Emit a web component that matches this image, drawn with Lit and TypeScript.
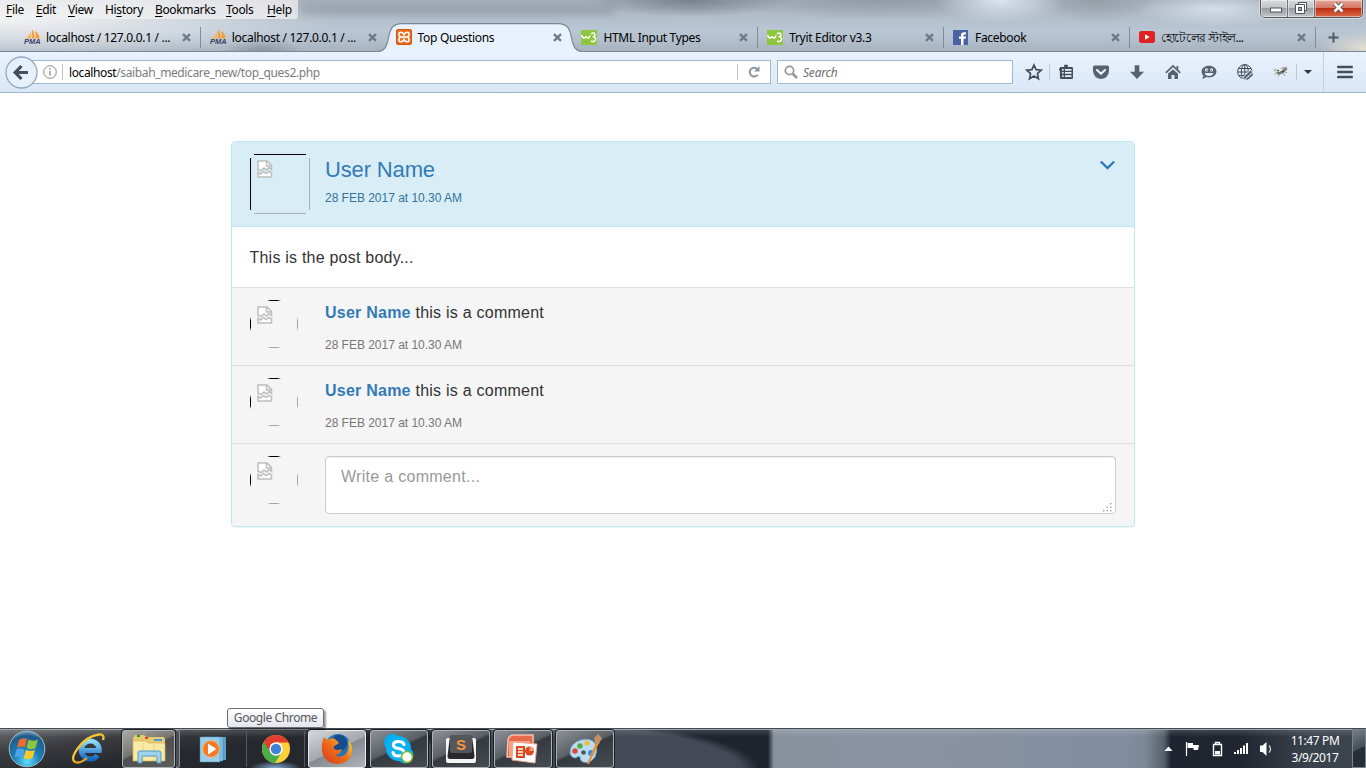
import { LitElement, html, css, svg, nothing } from "lit";
import { customElement } from "lit/decorators.js";
import { classMap } from "lit/directives/class-map.js";

const closeX = html`<svg class="x" width="9" height="9" viewBox="0 0 9 9"><path d="M1 1.2 L8 7.8 M8 1.2 L1 7.8" stroke="#6b7a8a" stroke-width="2.3" fill="none"/></svg>`;

const pma = html`<svg width="17" height="16" viewBox="0 0 17 16">
  <path d="M7 1 C6.5 5 4 8 1.5 9.5 L7.5 9.5 Z" fill="#f9b45c"/><path d="M8.3 0 V9.5 H10.2 C10.5 6 10 3 8.3 0Z" fill="#f79320"/>
  <path d="M11 2 C14 4 15.5 6.5 15.5 9.5 H11.2 C12 7 11.8 4 11 2Z" fill="#f89c2e"/>
  <text x="0" y="15.3" font-family="Liberation Sans, sans-serif" font-size="6.6" font-weight="bold" font-style="italic" fill="#3d3c68" textLength="16.5" lengthAdjust="spacingAndGlyphs">PMA</text></svg>`;
const xampp = html`<svg width="16" height="16" viewBox="0 0 16 16"><rect x=".5" y=".5" width="15" height="15" rx="1.5" fill="#ec6b1e" stroke="#c8560f"/>
  <path d="M8 5.600Q7 3.200 4.800 3.200Q2.900 3.200 2.900 5.200Q2.900 7.400 4.800 8Q2.900 8.600 2.900 10.800Q2.900 12.800 4.800 12.800Q7 12.800 8 10.400Q9 12.800 11.200 12.800Q13.100 12.800 13.100 10.800Q13.100 8.600 11.200 8Q13.100 7.400 13.100 5.200Q13.100 3.200 11.200 3.200Q9 3.200 8 5.600ZM5.500 8H10.500" fill="none" stroke="#fff" stroke-width="1.600"/></svg>`;
const w3 = html`<svg width="16" height="15" viewBox="0 0 16 15"><rect width="16" height="15" rx=".5" fill="#8dc63f"/>
  <path d="M.8 5.200Q1.200 8 3 8Q4.700 8 4.900 6Q5.200 8 6.800 8Q8.400 8 9 5.500" fill="none" stroke="#fff" stroke-width="1.500"/>
  <path d="M10 4Q12 2.300 13.600 3.600Q14.800 6.200 11.800 6.800Q15.200 7 14.500 9.800Q13.200 12.600 10 11" fill="none" stroke="#fff" stroke-width="1.500"/></svg>`;
const fb = html`<svg width="15" height="15" viewBox="0 0 15 15"><rect width="15" height="15" fill="#4862a3"/><path d="M8 15 V8.8 H6 V6.5 H8 V5 Q8 2.2 11 2.2 H13 V4.6 H11.6 Q10.5 4.6 10.5 5.6 V6.5 H13 L12.7 8.8 H10.5 V15Z" fill="#fff"/></svg>`;
const yt = html`<svg width="16" height="12" viewBox="0 0 16 12"><rect width="16" height="12" rx="2.5" fill="#e02225"/><path d="M6 3.3 L10.6 6 L6 8.7Z" fill="#fff"/></svg>`;

const tabs = [
  { icon: pma, title: "localhost / 127.0.0.1 / ..." },
  { icon: pma, title: "localhost / 127.0.0.1 / ..." },
  { icon: xampp, title: "Top Questions", active: true },
  { icon: w3, title: "HTML Input Types" },
  { icon: w3, title: "Tryit Editor v3.3" },
  { icon: fb, title: "Facebook" },
  { icon: yt, title: "হোটেলের স্টাইল...", narrow: true },
];

const menus = [["", "F", "ile", 30], ["", "E", "dit", 32], ["", "V", "iew", 37], ["Hi", "s", "tory", 50], ["", "B", "ookmarks", 71], ["", "T", "ools", 41], ["", "H", "elp", 30]];

const G = "#434e5a";
const tools = [
  svg`<path d="M6.200 3V.8h3.600V3h4q1.200 0 1.200 1.300v9.400q0 1.300-1.200 1.300H3.200q-1.300 0-1.300-1.300V6.500H1v-2h.9V3Z" fill=${G}/><path d="M4 5h1.600v1.700H4zM7 5h6.500v1.700H7zM4 8.100h1.600v1.700H4zM7 8.100h6.500v1.700H7zM4 11.200h1.600v1.700H4zM7 11.200h6.500v1.700H7z" fill="#e6eff9"/>`,
  svg`<path d="M1.5 1.5H14.5Q16 1.5 16 3V7Q15.5 14 8 15Q.5 14 0 7V3Q0 1.5 1.5 1.5Z" fill="#56626f"/><path d="M4 6l4 3.8L12 6" fill="none" stroke="#eef4fb" stroke-width="2.1" stroke-linecap="round" stroke-linejoin="round"/>`,
  svg`<path d="M5.7 1.3h4.6v6.4H15L8 15L1 7.7h4.7Z" fill="#56626f"/>`,
  svg`<path d="M.8 8.800L8 2l7.200 6.800" fill="none" stroke="#56626f" stroke-width="1.700"/><path d="M11.500 2h1.800v4l-1.800-1.700zM3 9.800L8 5.200l5 4.600V15H9.500v-4h-3v4H3Z" fill="#56626f"/>`,
  svg`<path d="M8 1.800c4.400 0 7.400 2.500 7.400 5.800s-3 5.900-7.400 5.900c-1 0-2-.1-2.800-.4C4 14.200 2.500 14.700 1 14.700c.9-.8 1.300-1.700 1.300-2.900C1.200 10.700.6 9.200.6 7.600.6 4.300 3.600 1.800 8 1.800Z" fill="#56626f"/><circle cx="5.500" cy="6" r="1.700" fill="#e6eff9"/><circle cx="10.500" cy="6" r="1.700" fill="#e6eff9"/><path d="M3.600 9h8.800Q11.500 11.900 8 11.900T3.600 9Z" fill="#e6eff9"/><circle cx="5.700" cy="6.200" r=".7" fill=${G}/><circle cx="10.300" cy="6.200" r=".7" fill=${G}/>`,
  svg`<g fill="none" stroke=${G} stroke-width="1"><circle cx="7.800" cy="7.800" r="7.200"/><ellipse cx="7.800" cy="7.800" rx="3.500" ry="7.200"/><path d="M7.800 .8V15M.8 8H15M2 4.500H14M2 11.500H14"/></g><path d="M13.500 6L6.500 12.800l-1.200 3L8.500 14.800 15.800 8Z" fill="#56626f" stroke="#e6eff9" stroke-width="1"/><path d="M10 15.500L16 10" stroke="#56626f" stroke-width="1.500"/>`,
  svg`<path d="M1 5l6 .5L10 3l5-.5-2 4-5 2.500-5-.500Z" fill="#c4c5c3"/><ellipse cx="9" cy="7.500" rx="4.500" ry="2.500" fill="#75756f" transform="rotate(-22 9 7.500)"/><circle cx="13.500" cy="5" r="1.800" fill="#85857e"/><path d="M6 8L2.500 10.500M8 9.500L6 12.500M11 9l2 3M12.500 7.500l2.500 1.500M3 5.500l3 2" stroke="#8a8a83" stroke-width=".9"/><path d="M2 7.500l6-3 4 1-5 2.500Z" fill="#e4e4e4"/><path d="M5 7l2-.6M10 8l2-1.500" stroke="#333" stroke-width="1"/>`,
];

@customElement("firefox-chrome")
class FirefoxChrome extends LitElement {
  static styles = css`
    :host { display: block; height: 93px; font: 12px "Noto Sans", "Open Sans", sans-serif; color: #000; }
    .frame { height: 52px; box-sizing: border-box; border-bottom: 1px solid #7b8896; display: flex; flex-direction: column;
      background:
        radial-gradient(ellipse 65px 22px at 1000px 1px, rgba(222,231,241,.95), transparent),
        radial-gradient(ellipse 80px 18px at 1215px 9px, rgba(217,227,236,.9), transparent),
        radial-gradient(ellipse 60px 24px at 1095px 0, rgba(139,147,155,.6), transparent),
        radial-gradient(ellipse 100px 17px at 690px 0, rgba(117,126,138,.95), transparent),
        radial-gradient(ellipse 150px 20px at 880px 0, rgba(137,146,157,.7), transparent),
        radial-gradient(ellipse 40px 12px at 262px 51px, rgba(110,118,128,.5), transparent),
        radial-gradient(ellipse 50px 17px at 1366px 48px, rgba(234,227,213,.9), transparent),
        radial-gradient(ellipse 330px 44px at 10px 18px, rgba(243,243,244,1), rgba(232,234,237,.6) 50%, transparent),
        linear-gradient(#a5aeb9, #b3bfcb 35%, #b9c6d4 60%, #b3bfcc 80%, #a7b2be); }
    .menubar { height: 23px; display: flex; justify-content: space-between; align-items: flex-start; }
    .menu { width: 298px; height: 19px; box-sizing: border-box; padding-left: 6px; display: flex; background: rgba(240,240,241,.75); border-radius: 0 0 4px 0; line-height: 19px; letter-spacing: -.35px; }
    .item { white-space: nowrap; flex: none; }
    .u { text-decoration: underline; text-underline-offset: 2px; }
    .ghost { width: 315px; height: 8px; margin: 6px auto 0 2px; background: rgba(75,85,98,.26); filter: blur(4px); flex: none; }
    .win { display: flex; width: 103px; height: 18px; margin-right: 3px; box-sizing: border-box; border: 1px solid #54575b; border-top: 0; border-radius: 0 0 5px 5px; overflow: hidden; box-shadow: 0 0 0 1px rgba(255,255,255,.45); }
    .wb { display: flex; align-items: center; justify-content: center; width: 27px; border-right: 1px solid #6e7379; background: linear-gradient(#d8dadc, #bfc3c7 48%, #989da3 50%, #c3c7ca); box-shadow: inset 0 0 0 1px rgba(255,255,255,.45); padding-bottom: 2px; box-sizing: border-box; }
    .wb.low { padding: 3px 0 0 3px; }
    .wb.red { flex: 1; border: 0; background: linear-gradient(#e6a99b, #d3745f 48%, #bf2f12 50%, #da6b4a); }
    .tabs { display: flex; height: 29px; padding-left: 15px; }
    .tab { position: relative; width: 185.800px; box-sizing: border-box; display: flex; align-items: center; padding: 1px 9px 0 9px; flex: none; border-right: 1px solid transparent; }
    .tab::after { content: ""; position: absolute; right: -1px; top: 4px; width: 1px; height: 21px; background: #7f8c9a; }
    .tab.noline::after { display: none; }
    .ico { width: 22px; height: 16px; display: flex; align-items: center; z-index: 1; }
    .title { flex: 1; z-index: 1; white-space: nowrap; letter-spacing: -.31px; line-height: 16px; padding-top: 2px; }
    .title.narrow { letter-spacing: -.55px; padding-top: 1px; }
    .x { z-index: 1; margin-top: 1px; }
    .shape { position: absolute; left: -9px; top: 0; z-index: 0; }
    .plus { margin: 9px 0 0 12px; }
    .bar { height: 41px; box-sizing: border-box; display: flex; align-items: center; background: linear-gradient(#e9f2fc, #d9e7f6); border-bottom: 1px solid #9fb7cf; padding-left: 5px; }
    .back { width: 33px; height: 33px; flex: none; z-index: 1; margin-right: -10px; }
    .field { height: 24px; box-sizing: border-box; background: #fff; border: 1px solid #a3b9cf; display: flex; align-items: center; }
    .url { width: 743px; padding-left: 13px; }
    .addr { flex: 1; color: #7b7b7b; letter-spacing: -.38px; padding: 1px 0 0 6px; white-space: nowrap; }
    .host { color: #000; }
    .sep { width: 1px; height: 16px; background: #c0c6cc; flex: none; }
    .reload { width: 32px; display: flex; justify-content: center; }
    .search { width: 236px; margin-left: 6px; padding-left: 6px; gap: 5px; color: #6d6d6d; font-style: italic; letter-spacing: -.2px; }
    .slot { width: 36px; display: flex; justify-content: center; align-items: center; flex: none; }
    .slot.star { margin-left: 5px; width: 31px; padding-left: 0; }
    .slot.first { width: 31px; margin-right: 2px; }
    .slot.fly { width: 33px; }
    .slot.drop { width: 21px; }
    .slot.burger { width: 42px; height: 40px; border-left: 1px solid #c3d0de; }
  `;
  render() {
    return html`
      <div class="frame">
        <div class="menubar">
          <div class="menu">${menus.map(m => html`<span class="item" style="width:${m[3]}px">${m[0]}<span class="u">${m[1]}</span>${m[2]}</span>`)}</div>
          <div class="ghost"></div>
          <div class="win">
            <div class="wb low"><svg width="12" height="6" viewBox="0 0 12 6"><rect x=".5" y="1" width="11" height="4" fill="#fff" stroke="#4d5262"/></svg></div>
            <div class="wb"><svg width="12" height="12" viewBox="0 0 12 12"><path d="M3.500 .5H11.500V8.500H9.500M3.500 .5V2.500" fill="#fff" stroke="#4d5262"/><path d="M.5 2.500H9.500V11.500H.5Z" fill="#fff" stroke="#4d5262"/><rect x="3.500" y="5.500" width="3" height="3" fill="#aaa" stroke="#4d5262"/></svg></div>
            <div class="wb red"><svg width="13" height="11" viewBox="0 0 13 11"><path d="M2.500 1.500L10.500 9.500M10.500 1.500L2.500 9.500" stroke="#5a4550" stroke-width="4.200"/><path d="M2.500 1.500L10.500 9.500M10.500 1.500L2.500 9.500" stroke="#fff" stroke-width="2.600"/></svg></div>
          </div>
        </div>
        <div class="tabs">
          ${tabs.map((t, i) => html`<div class=${classMap({ tab: true, noline: i === 1 || i === 2 })}>
            ${t.active ? html`<svg class="shape" width="204" height="30" viewBox="0 0 204 30"><path d="M0 29 C6 28.500 8 25 10 17 C12 6 14 1 24 1 H180 C190 1 192 6 194 17 C196 25 198 28.500 204 29 V30 H0Z" fill="#e9f2fc"/><path d="M0 28.500 C6 28 8 25 10 17 C12 6 14 .7 24 .7 H180 C190 .7 192 6 194 17 C196 25 198 28 204 28.500" fill="none" stroke="#7b8896" stroke-width="1.200"/></svg>` : nothing}
            <span class="ico">${t.icon}</span><span class=${classMap({ title: true, narrow: !!t.narrow })}>${t.title}</span>${closeX}
          </div>`)}
          <svg class="plus" width="11" height="11" viewBox="0 0 11 11"><path d="M5.500 .5V10.500M.5 5.500H10.500" stroke="#4d5a68" stroke-width="2"/></svg>
        </div>
      </div>
      <div class="bar">
        <svg class="back" viewBox="0 0 33 33"><circle cx="16.500" cy="16.500" r="15.500" fill="#e6f0fb" stroke="#92a8be" stroke-width="1.300"/><path d="M23 16.500H11M16.500 10L10.200 16.500L16.500 23" fill="none" stroke="#434e5a" stroke-width="3.200"/></svg>
        <div class="field url">
          <svg width="18" height="16" viewBox="0 0 18 16"><circle cx="8" cy="8" r="6.300" fill="none" stroke="#8a8a8a"/><path d="M8 7V11.500M8 4.300V5.800" stroke="#8a8a8a" stroke-width="1.400"/></svg>
          <span class="sep" style="margin-left:2px"></span>
          <span class="addr"><span class="host">localhost</span>/saibah_medicare_new/top_ques2.php</span>
          <span class="sep"></span>
          <span class="reload"><svg width="12" height="12" viewBox="0 0 12 12"><path d="M9.600 8.700A4.400 4.400 0 1 1 9.300 3.100" fill="none" stroke="#8794a1" stroke-width="1.900"/><path d="M11.500 0V5.500H6.300Z" fill="#8794a1"/></svg></span>
        </div>
        <div class="field search">
          <svg width="14" height="14" viewBox="0 0 14 14"><circle cx="5.500" cy="5.500" r="4.200" fill="none" stroke="#999" stroke-width="1.800"/><path d="M8.500 8.500L13 13" stroke="#999" stroke-width="2.600"/></svg><span>Search</span>
        </div>
        <span class="slot star"><svg width="18" height="18" viewBox="0 0 18 18"><path d="M9 2L11.100 6.700L16.200 7.200L12.400 10.600L13.500 15.700L9 13.100L4.500 15.700L5.600 10.600L1.800 7.200L6.900 6.700Z" fill="none" stroke=${G} stroke-width="1.700"/></svg></span>
        <span class="sep"></span>
        ${tools.map((t, i) => html`<span class=${classMap({ slot: true, first: i === 0, fly: i === 6 })}><svg width="16" height="16" viewBox="0 0 16 16">${t}</svg></span>`)}
        <span class="sep"></span>
        <span class="slot drop"><svg width="8" height="4" viewBox="0 0 8 4"><path d="M0 0H8L4 4Z" fill="#333"/></svg></span>
        <span style="flex:1"></span>
        <span class="slot burger"><svg width="16" height="14" viewBox="0 0 16 14"><path d="M1.200 2H14.800M1.200 7H14.800M1.200 12H14.800" stroke=${G} stroke-width="2.400" stroke-linecap="round"/></svg></span>
      </div>`;
  }
}

const broken = html`<svg class="broken" width="16" height="18" viewBox="0 0 16 18"><path d="M1 9.500V1H10L14.500 5.500V9.500L12 7.500L9.500 10L7 8L4 10.500Z" fill="#fff" stroke="#bdbdbd" stroke-width="1.500"/><path d="M9.500 1V6H14.500" fill="none" stroke="#bdbdbd" stroke-width="1.500"/><path d="M1 12.500L3.500 14L6.500 11.500L9 13.500L12 11.500L14.500 13V17H1Z" fill="#fff" stroke="#bdbdbd" stroke-width="1.500"/></svg>`;

@customElement("post-panel")
class PostPanel extends LitElement {
  static styles = css`
    :host { display: block; width: 904px; font: 16px "Liberation Sans", Arial, sans-serif; color: #333; }
    .panel { border: 1px solid #bce8f1; border-radius: 4px; overflow: hidden; height: 386px; box-sizing: border-box; box-shadow: 0 1px 1px rgba(0,0,0,.05); background: #fff; }
    .head { display: flex; height: 85px; box-sizing: border-box; background: #d9edf7; border-bottom: 1px solid #bce8f1; padding: 12px 18px 0; }
    .pic { width: 75px; flex: none; }
    .broken { display: block; }
    .frame { display: block; width: 60px; height: 60px; box-sizing: border-box; padding: 6px 0 0 7px;
      background: linear-gradient(#000,#000) 4px 0/52px 1px no-repeat, linear-gradient(#000,#000) 0 4px/1px 52px no-repeat, linear-gradient(#b0b0b0,#b0b0b0) 4px 59px/52px 1px no-repeat, linear-gradient(#b0b0b0,#b0b0b0) 59px 4px/1px 52px no-repeat; }
    .frame.round { width: 48px; height: 48px; padding-top: 6px;
      background: linear-gradient(90deg,transparent,#000 25% 75%,transparent) 17px 0/14px 1px no-repeat, linear-gradient(transparent,#000 25% 75%,transparent) 0 17px/1px 14px no-repeat, linear-gradient(90deg,transparent,#a5a5a5 25% 75%,transparent) 17px 47px/14px 1px no-repeat, linear-gradient(transparent,#a5a5a5 25% 75%,transparent) 47px 17px/1px 14px no-repeat; }
    .name { font-size: 22px; line-height: 26px; color: #337ab7; margin-top: 3px; letter-spacing: -.15px; }
    .date { font-size: 12px; line-height: 16px; letter-spacing: -.02px; }
    .head .date { color: #31739b; margin-top: 7px; }
    .grow { flex: 1; }
    .chev { margin: 6px 0 0; }
    .body { height: 60px; line-height: 61px; padding-left: 17.500px; letter-spacing: .22px; }
    .row { display: flex; height: 78px; box-sizing: border-box; background: #f5f5f5; border-top: 1px solid #ddd; padding: 12px 18px 0; }
    .row.last { height: 83px; }
    .line { line-height: 25px; letter-spacing: .24px; }
    .who { font-weight: bold; color: #337ab7; }
    .row .date { color: #777; margin-top: 12px; }
    .input { flex: 1; height: 58px; box-sizing: border-box; border: 1px solid #ccc; border-radius: 4px; background: #fff; box-shadow: inset 0 1px 1px rgba(0,0,0,.075); padding: 8px 3px 1px 15px; color: #999; line-height: 23px; letter-spacing: .29px; display: flex; justify-content: space-between; }
    .grip { align-self: flex-end; }
  `;
  render() {
    const comment = html`<div class="row"><div class="pic"><span class="frame round">${broken}</span></div>
      <div><div class="line"><span class="who">User Name</span> this is a comment</div><div class="date">28 FEB 2017 at 10.30 AM</div></div></div>`;
    return html`<div class="panel">
      <div class="head"><div class="pic"><span class="frame">${broken}</span></div>
        <div class="grow"><div class="name">User Name</div><div class="date">28 FEB 2017 at 10.30 AM</div></div>
        <svg class="chev" width="17" height="10" viewBox="0 0 17 10"><path d="M1.800 1.500L8.500 8L15.200 1.500" fill="none" stroke="#2f79b9" stroke-width="2.400"/></svg></div>
      <div class="body">This is the post body...</div>
      ${comment}${comment}
      <div class="row last"><div class="pic"><span class="frame round">${broken}</span></div>
        <div class="input"><span>Write a comment...</span><svg class="grip" width="9" height="9" viewBox="0 0 9 9"><path d="M7 0h1.500v1.500H7zM7 3.500h1.500V5H7zM7 7h1.500v1.500H7zM3.500 3.500H5V5H3.500zM3.500 7H5v1.500H3.500zM0 7h1.500v1.500H0z" fill="#aaa"/></svg></div></div>
    </div>`;
  }
}

const apps = {
  explorer: html`<svg width="34" height="32" viewBox="0 0 34 32"><path d="M1 5L3 2H12L14 4H32L33 7V27H1Z" fill="#e9ca70"/><rect x="5" y="2" width="3" height="2" fill="#169b35"/><rect x="13" y="4" width="3" height="2" fill="#d8442a"/><rect x="22" y="6" width="8" height="2" fill="#3c9ce0"/><path d="M1 8H14L16 10H33V28H1Z" fill="#f9e9a6" stroke="#d7b65b" stroke-width=".7"/><path d="M11 10V28M22 11V28" stroke="#ead384"/><path d="M6 30V20Q6 18 8 18H27Q29 18 29 20V30H25V24Q25 23 24 23H11Q10 23 10 24V30Z" fill="#9fd3ec" stroke="#4f9dc6"/></svg>`,
  wmp: html`<svg width="28" height="28" viewBox="0 0 28 28"><path d="M8 2H27V25H8Z" fill="#5aa1cc"/><path d="M5 2H24V26H5Z" fill="#84c0e0" stroke="#3d84b1" stroke-width=".5"/><path d="M1 2H21V27H1Z" fill="#9acde8" stroke="#4a8fb9" stroke-width=".5"/><circle cx="12" cy="14" r="8.300" fill="#f27a22" stroke="#fbb06b"/><path d="M9 8.500L17.500 14L9 19.500Z" fill="#fff"/></svg>`,
  chrome: html`<svg width="30" height="30" viewBox="0 0 30 30"><circle cx="15" cy="15" r="14" fill="#ffd03b"/><path d="M15 15L2.900 8A14 14 0 0 0 14 29L20.500 18.500Z" fill="#4aae48"/><path d="M2.900 8L9.500 18.500L15 15V8.500H27.500A14 14 0 0 0 2.900 8Z" fill="#e33b2e"/><circle cx="15" cy="15" r="6.700" fill="#fff"/><circle cx="15" cy="15" r="5.200" fill="#3f83d4"/></svg>`,
  firefox: html`<svg width="32" height="32" viewBox="0 0 32 32"><defs><linearGradient id="ff" x1="0" y1="1" x2="1" y2="0"><stop stop-color="#d4371c"/><stop offset=".5" stop-color="#ee6d1c"/><stop offset="1" stop-color="#ffdf3c"/></linearGradient></defs><circle cx="17" cy="14" r="13" fill="#2474b5"/><circle cx="18" cy="10" r="8" fill="#164b8c"/><path d="M3 4L6 7Q10 4 14 6L18 10L15 12Q12 13 13 16Q17 18 21 16Q19 22 14 22Q19 26 25 21Q29 16 27 6Q32 12 31 19Q28 31 16 31Q3 30 1 18Q0 10 3 4Z" fill="url(#ff)"/></svg>`,
  skype: html`<svg width="32" height="32" viewBox="0 0 32 32"><circle cx="9.500" cy="9.500" r="8.500" fill="#00aef0"/><circle cx="22" cy="22" r="8.500" fill="#00aef0"/><circle cx="15.500" cy="15.500" r="12.500" fill="#08b1f1"/><path d="M21 11.500Q20 8.500 15.500 8.500Q10.500 8.500 10.500 12Q10.500 14.800 15.500 15.500Q21 16.500 21 19.700Q21 23 15.500 23Q10.500 23 10 19.500" fill="none" stroke="#fff" stroke-width="3.200" stroke-linecap="round"/><circle cx="24" cy="24" r="5.500" fill="#fff" stroke="#7eb72f" stroke-width="1.500"/></svg>`,
  sublime: html`<svg width="32" height="30" viewBox="0 0 32 30"><rect x="1" y="4" width="30" height="25" rx="2" fill="#f4f4f4"/><path d="M5 2H27L29.500 22Q29.500 25 27 25H5Q2.500 25 2.500 22Z" fill="#29292b"/><rect x="5" y="1" width="22" height="18" rx="2" fill="#55565a"/><text x="16" y="16" text-anchor="middle" font-family="Liberation Sans, sans-serif" font-weight="bold" font-size="15" fill="#f6963b">S</text></svg>`,
  ppt: html`<svg width="34" height="32" viewBox="0 0 34 32"><path d="M2 7Q3 2 8 2H27V24H1Z" fill="#e9694a" stroke="#f6c1b1" stroke-width="1.500"/><path d="M3 8H24V25H3Z" fill="#f5a186"/><path d="M7 9L31 11L29 30L6 27Z" fill="#fff" stroke="#eda48e"/><path d="M10 13H19V25H10Z" fill="#d94b22"/><path d="M12 16h5M12 19h5M12 22h5" stroke="#fff" stroke-width="1.600"/><circle cx="23.500" cy="18" r="4.500" fill="#d94b22"/><path d="M23.500 18V13.500A4.500 4.500 0 0 1 28 18Z" fill="#f39a73"/></svg>`,
  paint: html`<svg width="34" height="32" viewBox="0 0 34 32"><path d="M2 20Q2 10 13 7Q24 4 28 12Q30 17 27 24Q22 31 15 29Q12 28 12 24Q10 22 8 25Q3 25 2 20Z" fill="#bcdcf2" stroke="#6fa5cd"/><circle cx="7" cy="18" r="2.700" fill="#d9483e"/><circle cx="12" cy="13" r="2.700" fill="#55ab40"/><circle cx="19" cy="10" r="2.600" fill="#f1bd37"/><circle cx="15.500" cy="19.500" r="2.300" fill="#4d535c"/><circle cx="23" cy="20" r="3" fill="#438cd2"/><path d="M28 9L31 10L21 31L19 31Z" fill="#e59335"/><path d="M26 5L30 1L34 5L31 11L27 10Z" fill="#c09163"/></svg>`,
};

@customElement("win-taskbar")
class WinTaskbar extends LitElement {
  static styles = css`
    :host { display: block; height: 40px; }
    .bar { height: 40px; box-sizing: border-box; display: flex; border-top: 1px solid #454b52; box-shadow: inset 0 1px 0 #a2a8ae;
      background:
        linear-gradient(rgba(255,255,255,.16), transparent 8px),
        linear-gradient(90deg, transparent 768px, #87919d 774px, #8993a2 900px, #828da0 1120px, #7d8896 1145px, #57616c 1164px, transparent 1171px),
        linear-gradient(90deg, transparent 1164px, #1f2530 1170px, #20262f 1240px, #3a424c 1310px, #3c444e),
        radial-gradient(ellipse 190px 48px at 570px 42px, #434a55 90%, transparent),
        linear-gradient(172deg, #65686c 0, #393b3f 30%, #25282c 60%) 0 0/310px 40px no-repeat,
        #1d242e; }
    .cell { display: flex; align-items: center; justify-content: center; flex: none; box-sizing: border-box; }
    .btn { width: 58px; margin: 1px 4px 0 0; height: 38px; border: 1px solid #aeb2b6; border-radius: 3px; background: linear-gradient(155deg, #8c9096, #5b6067 45%, #353a41 50%, #474c53); box-shadow: 0 0 0 1px #1c2025; }
    .btn.hot { background: linear-gradient(155deg, #d4d7da, #a4a8ad 50%, #858a90 52%, #b0b5ba); border-color: #e9ebed; }
    .btn.exp { width: 53px; margin-right: 1px; background: linear-gradient(155deg, #aaa9a6, #76756f 45%, #4d4e4d 50%, #5c5d5d); }
    .stack { width: 4px; height: 38px; margin-top: 1px; border: 1px solid #8b8f93; border-left: 0; border-radius: 0 3px 3px 0; box-sizing: border-box; background: #4b4f54; }
    .div { width: 1px; height: 36px; margin-top: 2px; background: #55595e; }
    .glow { background: radial-gradient(ellipse 26px 7px at 50% 100%, rgba(150,195,245,.85), transparent); height: 39px; }
    .grow { flex: 1; }
    .tray { display: flex; align-items: center; color: #fff; padding-top: 1px; }
    .clock { width: 74px; text-align: center; font: 12px/17px "Noto Sans", "Open Sans", sans-serif; letter-spacing: -.4px; }
    .desk { width: 14px; height: 39px; box-sizing: border-box; border: 1px solid #7b838b; background: linear-gradient(155deg, #77808a, #454d57 50%, #272e37 52%); }
  `;
  render() {
    return html`<div class="bar">
      <div class="cell" style="width:54px"><svg width="38" height="38" viewBox="0 0 38 38"><defs><radialGradient id="orb" cx=".5" cy=".85" r=".9"><stop stop-color="#5fe0fb"/><stop offset=".4" stop-color="#1d80b8"/><stop offset=".8" stop-color="#205a88"/><stop offset="1" stop-color="#a5c5d8"/></radialGradient></defs><circle cx="19" cy="19" r="17.800" fill="url(#orb)" stroke="#9fc0d3" stroke-width="1"/>
        <path d="M11 10Q15 7 19 9L17 17.500Q13 15.500 9 18Z" fill="#ef6a2c"/><path d="M20.500 9.500Q25 12 30 9.500L27.500 18Q23 20.500 18.500 18Z" fill="#8cc63f"/><path d="M8.500 19.500Q12.500 17.500 16.500 19.500L14.500 27.500Q10.500 25.500 6.500 27.500Z" fill="#4da4e8"/><path d="M18 20Q22.500 22 27 20L24.500 28Q20 30.500 15.800 28Z" fill="#fdc927"/></svg></div>
      <div class="cell" style="width:68px"><svg width="34" height="32" viewBox="0 0 34 32"><defs><linearGradient id="ie" x2="0" y2="1"><stop stop-color="#8fdcf9"/><stop offset="1" stop-color="#1467c0"/></linearGradient></defs><path d="M26.500 22.500A9 9 0 1 1 28.300 17.500H12" fill="none" stroke="url(#ie)" stroke-width="5"/><path d="M4 29Q-1 26 7 15Q16 3 28 1.500Q34 1 32 7" fill="none" stroke="#f5c42f" stroke-width="2.300"/><path d="M4 29Q9 31 16 25" fill="none" stroke="#e4a71d" stroke-width="2.300"/></svg></div>
      <div class="cell btn exp">${apps.explorer}</div><div class="stack"></div>
      <div class="cell" style="width:66px">${apps.wmp}</div><div class="div"></div>
      <div class="cell glow" style="width:57px">${apps.chrome}</div><div class="div" style="margin-right:3px"></div>
      <div class="cell btn hot">${apps.firefox}</div>
      <div class="cell btn">${apps.skype}</div><div class="cell btn">${apps.sublime}</div><div class="cell btn">${apps.ppt}</div><div class="cell btn">${apps.paint}</div>
      <div class="grow"></div>
      <div class="tray">
        <svg width="112" height="20" viewBox="1164 739 112 20"><path d="M1164.500 751L1168.500 746.500L1172.500 751Z" fill="#fff"/><path d="M1186.500 742V756" stroke="#fff" stroke-width="1.200"/><path d="M1187.500 743H1193V745H1199L1198 750H1193.500V748H1187.500Z" fill="#fff"/><path d="M1213.500 744.500H1221.500V755.500H1213.500ZM1215.500 744V742.500H1219.500V744" fill="none" stroke="#fff" stroke-width="1.400"/><path d="M1215 751H1220V754.500H1215Z" fill="#fff"/><path d="M1234 752h2v2h-2zM1237 750h2v4h-2zM1240 748h2v6h-2zM1243 745.500h2v8.500h-2zM1246 743h2v11h-2z" fill="#fff"/><path d="M1260 745.500H1262.500L1266.500 742V756L1262.500 752H1260Z" fill="#fff"/><path d="M1269 745.500Q1272 749 1269 752.500" fill="none" stroke="#d5dbe1" stroke-width="1.200"/></svg>
        <div class="clock" style="margin-left:2px">11:47 PM<br>3/9/2017</div>
      </div>
      <div class="desk"></div>
    </div>`;
  }
}

@customElement("app-root")
class AppRoot extends LitElement {
  static styles = css`
    :host { display: flex; flex-direction: column; width: 1366px; height: 768px; background: #fff; overflow: hidden; position: relative; }
    .page { flex: 1; display: flex; justify-content: center; align-items: flex-start; padding-top: 48px; }
    .tip { position: absolute; left: 227px; top: 708px; width: 97px; height: 20px; box-sizing: border-box; border: 1px solid #6e6e72; border-radius: 3px; background: linear-gradient(#fff, #e4e5f0); box-shadow: 2px 2px 2px rgba(0,0,0,.4); font: 12px/18px "Noto Sans", "Open Sans", sans-serif; letter-spacing: -.4px; color: #575757; text-align: center; white-space: nowrap; }
  `;
  render() {
    return html`<firefox-chrome></firefox-chrome>
      <div class="page"><post-panel></post-panel></div>
      <win-taskbar></win-taskbar>
      <div class="tip">Google Chrome</div>`;
  }
}
